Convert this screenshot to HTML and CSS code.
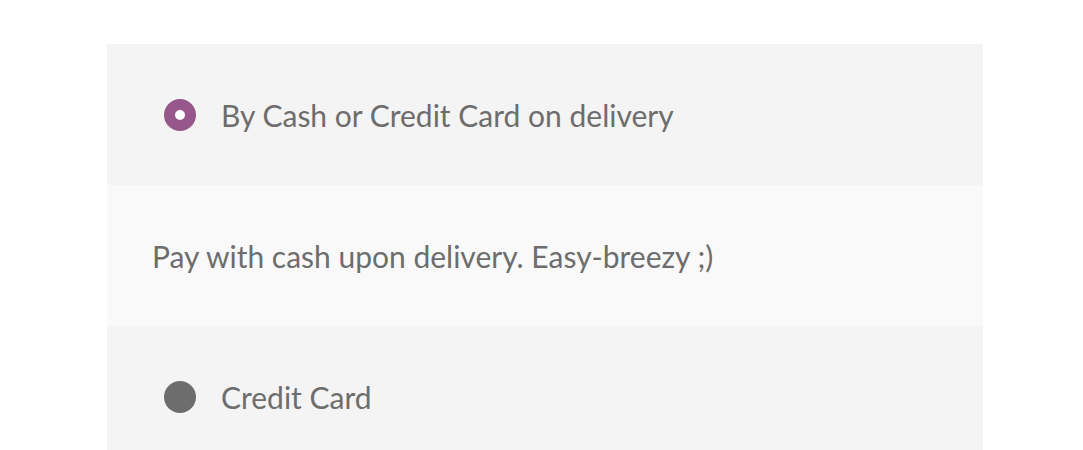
FILE: index.html
```html
<!DOCTYPE html>
<html>
<head>
<meta charset="utf-8">
<link rel="stylesheet" href="styles.css">
</head>
<body>
<div class="page">
  <ul class="methods">
    <li class="method">
      <label class="option"><span class="radio checked"></span><span class="label">By Cash or Credit Card on delivery</span></label>
    </li>
    <li class="desc">Pay with cash upon delivery. Easy-breezy ;)</li>
    <li class="method">
      <label class="option"><span class="radio"></span><span class="label">Credit Card</span></label>
    </li>
  </ul>
</div>
</body>
</html>
```
FILE: styles.css
```css
html, body { margin: 0; padding: 0; background: #fff; }
body { font-family: "Lato", "Open Sans", sans-serif; color: #6d6d6d; }
.page { padding: 44px 100px 0 107px; }
.methods { list-style: none; margin: 0; padding: 0; width: 876px; }
.method { background: #f4f4f4; height: 141px; display: flex; align-items: center; padding-left: 57px; box-sizing: border-box; }
.option { display: flex; align-items: center; gap: 25px; font-size: 30px; }
.radio { width: 32px; height: 32px; border-radius: 50%; background: #6d6d6d; box-sizing: border-box; flex: none; }
.radio.checked { background: #fff; border: 11px solid #96588a; }
.desc { background: #f9f9f9; height: 141px; display: flex; align-items: center; padding-left: 45px; box-sizing: border-box; font-size: 30px; }
```
